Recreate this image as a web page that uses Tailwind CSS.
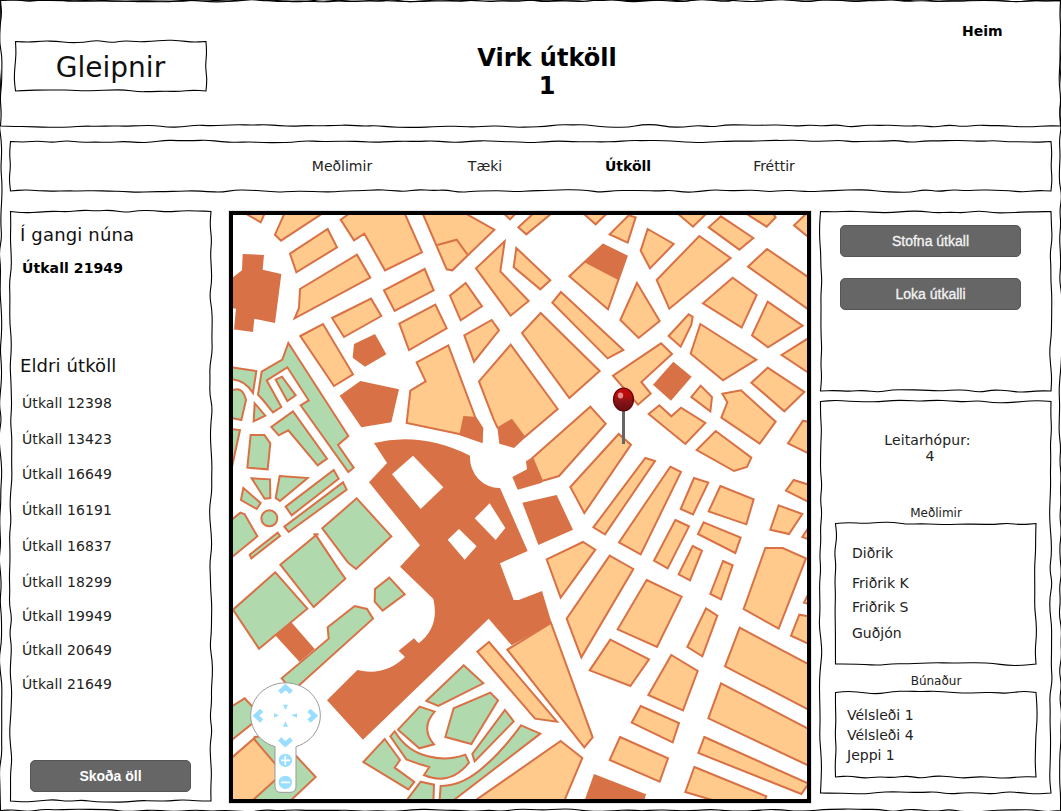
<!DOCTYPE html>
<html lang="is">
<head>
<meta charset="utf-8">
<title>Gleipnir</title>
<script src="https://cdn.jsdelivr.net/npm/@tailwindcss/browser@4"></script>
</head>
<body class="bg-white">
<div data-sketch="1061 811" class="relative w-[1061px] h-[811px] overflow-hidden bg-white font-['DejaVu_Sans',Verdana,sans-serif] text-sm leading-4 text-[#222]">
  <header data-sketch="1061 126" class="relative h-[126px] flex items-start">
    <div data-sketch="191 50" class="relative ml-[15px] mt-[41px] w-[191px] h-[50px] flex items-center justify-center pt-[3px] text-[28px] leading-none text-[#111]"><span>Gleipnir</span></div>
    <h1 class="ml-[241px] mt-11 w-[200px] text-center text-2xl leading-7 font-bold text-black">Virk útköll<br>1</h1>
    <a class="ml-[315px] mt-[23px] font-bold text-black">Heim</a>
  </header>

  <nav data-sketch="1041 50" class="relative mt-[15px] ml-[10px] w-[1041px] h-[50px] flex items-center">
    <a class="w-[100px] ml-[282px] text-center">Meðlimir</a>
    <a class="w-[100px] ml-[43px] text-center">Tæki</a>
    <a class="w-[100px] ml-[43px] text-center font-bold text-black">Útköll</a>
    <a class="w-[100px] ml-[46px] text-center">Fréttir</a>
  </nav>

  <main class="mt-[20px] ml-[10px] flex items-start">
    <aside data-sketch="201 590" class="relative w-[201px] h-[590px] flex flex-col items-start">
      <h2 class="ml-[10px] mt-[13px] text-lg leading-[22px] tracking-[0.16px] text-[#111]">Í gangi núna</h2>
      <p class="ml-3 mt-[14px] font-bold text-black tracking-[0.08px]">Útkall 21949</p>
      <h2 class="ml-[10px] mt-[79px] text-lg leading-[22px] tracking-[0.1px] text-[#111]">Eldri útköll</h2>
      <ul class="ml-3 mt-[18px] flex flex-col tracking-[0.08px]">
        <li class="h-9">Útkall 12398</li>
        <li class="h-[35px]">Útkall 13423</li>
        <li class="h-9">Útkall 16649</li>
        <li class="h-9">Útkall 16191</li>
        <li class="h-9">Útkall 16837</li>
        <li class="h-[34px]">Útkall 18299</li>
        <li class="h-[34px]">Útkall 19949</li>
        <li class="h-[34px]">Útkall 20649</li>
        <li class="h-4">Útkall 21649</li>
      </ul>
      <button class="ml-5 mt-[68px] w-[161px] h-8 rounded-[5px] border border-[#555] bg-[#666] font-['Liberation_Sans',Arial,sans-serif] text-sm font-bold text-white">Skoða öll</button>
    </aside>

    <section class="ml-[18px] mt-0 w-[582px] h-[592px] border-4 border-black bg-white outline outline-1 outline-black/10">
      <svg class="block w-full h-full" viewBox="233 215 574 584">
        <g stroke="#d87145" stroke-width="6" fill="#ffca8c">
          <g transform="translate(228 208) scale(.33333)">
            <path d="M50,15 98,43 112,12ZM170,15 141,80 159,98 290,12ZM186,137 299,63 327,118 205,193ZM216,243 387,140 427,209 200,331 213,300ZM338,35 378,97 409,77 471,187 582,133 525,5 380,5ZM468,247 590,183 617,247 500,309ZM514,347 622,290 656,361 543,426ZM312,330 429,272 460,324 348,387ZM217,384 285,348 375,499 318,534ZM566,463 661,412 741,626 763,661 761,701 694,678 536,645 547,548 593,520Z"/>
            <path fill="#d87145" stroke="none" d="M10,212 42,187 44,138 108,141 104,185 160,198 141,345 79,332 75,372 10,363 18,363 24,302 10,300ZM378,408 441,378 475,439 411,476 374,449ZM335,563 397,519 513,544 490,643 400,658ZM706,624 740,626 763,661 763,705 694,680Z"/>
            <path fill="#b1d9ae" d="M101,491 163,455 181,405 361,684 330,711 377,779 361,792 218,592 242,577 178,478 116,517 160,597 135,613 105,576 90,560ZM143,515 162,506 203,562 178,579ZM10,478 85,489 75,555Q50,514 10,514ZM10,548Q44,532 54,576L40,636 10,630ZM80,586 112,623 77,640Z"/>
          </g>
          <g transform="translate(228 400) scale(.33333)">
            <g fill="#b1d9ae">
              <path d="M195,34 130,81 152,106 181,91 269,196 297,176ZM68,105 109,105 127,130 119,208 58,203ZM10,87 36,90 12,200ZM71,235 126,238 127,294 110,296ZM155,228 239,234 156,303 143,294ZM46,264 98,309 86,327 39,300ZM10,360 37,338 50,343 88,409 10,473ZM65,464 149,398 156,408 70,475ZM173,320 317,210 332,236 191,346ZM169,380 345,247 356,269 182,396ZM283,385 386,295 490,409 384,507 360,488ZM157,494 264,406 330,505 352,536 257,621ZM142,517 15,629 93,746 238,626ZM484,533 530,583 464,632 440,605 441,567Z"/>
              <path d="M256,403H272"/>
              <circle cx="124" cy="355" r="24"/>
            </g>
            <path fill="#d87145" stroke="none" d="M438,129Q580,95 726,167A88,92 0 0 0 816,264L899,453 816,490 857,600 872,600 942,573 971,669 851,736 782,656 405,1019 297,901 388,810Q470,830 531,771L512,752 558,715 572,730Q636,680 616,597L576,558 516,500 576,436 423,247 477,189Z"/>
            <path fill="#fff" stroke="none" d="M555,167 646,262 578,327 492,223ZM785,310 832,384 803,420 740,355ZM693,387 746,439 710,479 659,419Z"/>
          </g>
          <g transform="translate(420 400) scale(.33333)">
            <path d="M272,-166 177,-56 220,56 232,82 276,110 315,110 413,27ZM337,174 511,20 557,71 417,228 366,243ZM451,261 596,102 633,134 493,339ZM520,382 676,174 705,183 555,403ZM380,478 489,426 526,449 422,593ZM569,467 640,507 484,772 440,656Z"/>
            <path fill="#d87145" stroke="none" d="M307,308 410,285 459,389 355,435ZM232,82 276,56 317,112 282,144 238,131ZM318,184 337,172 366,248 293,269 277,231 321,208Z"/>
          </g>
          <g transform="translate(420 208) scale(.33333)">
            <path d="M3,5 80,184 97,187 223,65 125,10ZM250,15 270,34 292,12ZM295,58 345,12 400,12 319,79ZM485,12 527,49 565,12ZM254,100 168,181 272,323 326,279 241,190ZM289,120 391,217 361,244 281,177ZM448,205 549,110 620,145 564,304ZM423,252 397,284 563,451 610,426ZM362,315 306,375 448,570 539,489ZM137,225 90,263 122,337 186,295ZM133,382 215,336 237,367 162,461Z"/>
            <path fill="none" d="M52,111 110,95 142,139"/>
            <path fill="#d87145" stroke="none" d="M549,107 622,144 596,217 493,163Z"/>
          </g>
          <g transform="translate(612 208) scale(.33333)">
            <path d="M47,104 -7,79 50,22 71,28ZM195,15 243,56 285,15ZM327,25 290,58 382,125 424,90ZM395,12 464,56 491,28 480,12ZM590,10 546,52 590,88ZM107,63 185,108 114,181 86,128ZM262,84 356,150 172,302 134,216ZM465,123 408,176 590,305 590,208ZM362,209 273,286 389,359 434,261ZM467,281 572,353 468,418 420,382ZM590,390 509,441 590,495ZM75,225 143,339 80,390 25,336ZM230,319 242,326 238,350 206,416 170,384ZM265,348 433,455 333,517 236,437ZM147,406 180,438 88,522 116,557 78,590 3,503ZM467,479 577,552 517,610 418,524ZM266,533 300,567 295,610 238,567ZM331,557 387,547 491,641 443,707 328,629 346,583Z"/>
            <path fill="#d87145" stroke="none" d="M184,461 239,506 177,578 123,530Z"/>
          </g>
          <g transform="translate(612 400) scale(.33333)">
            <path d="M110,42 142,16 178,49 207,23 280,69 220,132ZM311,93 418,173 405,201 366,213 254,150ZM590,66 573,62 528,130 590,160ZM545,240 590,254 590,306 522,272ZM500,316 571,342 531,402 475,389ZM590,382 571,411 590,418ZM175,200 207,216 86,463 21,427ZM246,234 289,248 243,343 206,327ZM325,258 425,298 403,373 290,334ZM190,360 231,379 167,505 126,482ZM275,367 386,413 370,459 258,402ZM242,438 270,452 234,541 200,523ZM333,483 362,496 327,598 295,582ZM104,540 209,590 135,741 17,688ZM460,444 512,444 582,475 500,686 395,627ZM590,580 576,608 590,612Z"/>
          </g>
          <g transform="translate(612 603) scale(.33333)">
            <path d="M-5,110 111,169 55,249 -67,202ZM282,16 316,38 271,160 226,132ZM383,74 590,184 590,320 339,190ZM590,40 562,35 537,98 590,123ZM327,241 590,378 590,488 289,346ZM277,402 590,542 568,573 259,450ZM247,492 463,580 455,600 330,600 220,567ZM178,156 257,204 213,322 109,276ZM86,309 201,360 182,418 59,359ZM24,402 168,466 143,536 -7,471Z"/>
            <path fill="#d87145" stroke="none" d="M-54,513 102,574 95,600 -85,600Z"/>
          </g>
          <g transform="translate(420 603) scale(.33333)">
            <path d="M207,117 172,146 345,347 411,356ZM262,140 393,60 518,403 493,433ZM422,414 487,465 430,600 155,600Z"/>
            <path fill="#b1d9ae" d="M131,187 190,241 55,309 19,294ZM211,269 234,292 154,423 76,402 101,316ZM255,321 281,355 164,475 157,453ZM303,367 361,392 90,600 58,600 62,549Q130,550 200,484 Q250,440 303,367ZM-1,311 44,326Q0,375 42,424L-2,436 -66,380ZM-89,400 -76,385Q-40,445 24,460 Q80,475 136,455L147,479Q90,550 12,516L28,492 0,484 -41,469ZM2,536 42,545 40,600 -46,600Z"/>
          </g>
          <g transform="translate(228 603) scale(.33333)">
            <path fill="#d87145" stroke="none" d="M140,95 190,58 260,138 215,177Z"/>
            <path fill="#b1d9ae" d="M299,73 380,9 417,18 435,47 210,250 182,250 161,226 302,107ZM10,311 50,286 100,340 10,412ZM80,402 145,395 263,522 180,600 60,600ZM470,408 516,471 500,494 559,537 541,559 406,477Z"/>
            <path d="M10,465 77,407 165,510 65,600 10,600Z"/>
            <!-- pan and zoom control -->
            <path fill="#fff" stroke="#999" stroke-width="3" d="M141,431A104.500,98 0 1 1 204,431V550Q204,568 186,568H159Q141,568 141,550Z"/>
            <path fill="none" stroke="#9df" stroke-width="14" d="M155,268 172,252 190,268M155,408 172,424 190,408M101,322 84,338 101,354M243,322 260,338 243,354"/>
            <path fill="#9df" stroke="none" d="M165,305H180L172,321ZM165,371H180L172,355ZM138,331V344L153,337ZM207,331V344L190,337Z"/>
            <circle cx="172" cy="472" r="20" fill="#9df" stroke="none"/>
            <circle cx="172" cy="538" r="20" fill="#9df" stroke="none"/>
            <path fill="none" stroke="#fff" stroke-width="5" d="M159,472H186M172,458V486M159,538H186"/>
          </g>
        </g>
        <!-- location pin -->
        <defs>
          <linearGradient id="pin" x1="0" y1="0" x2="0" y2="1"><stop offset="0" stop-color="#c80808"/><stop offset=".35" stop-color="#b50d0d"/><stop offset=".55" stop-color="#8a1518"/><stop offset="1" stop-color="#650c10"/></linearGradient>
        </defs>
        <path d="M623.500 408V444" stroke="#666" stroke-width="3"/>
        <ellipse cx="623.500" cy="399.500" rx="10" ry="11.500" fill="url(#pin)" stroke="#5c0508" stroke-width="1.200"/>
        <ellipse cx="620.500" cy="395.500" rx="2.700" ry="3" fill="#e58a8a"/>
      </svg>
    </section>

    <div class="ml-[9px] flex flex-col gap-[10px]">
      <section data-sketch="231 180" class="relative w-[231px] h-[180px] flex flex-col gap-[21px] pl-5 pt-[14px] font-['Liberation_Sans',Arial,sans-serif] text-[#f4f4f4]">
        <button class="w-[181px] h-8 rounded-[5px] border border-[#555] bg-[#666] [-webkit-text-stroke:0.3px_#f4f4f4]">Stofna útkall</button>
        <button class="w-[181px] h-8 rounded-[5px] border border-[#555] bg-[#666] [-webkit-text-stroke:0.3px_#f4f4f4]">Loka útkalli</button>
      </section>
      <section data-sketch="231 392" class="relative w-[231px] h-[392px] flex flex-col pl-[15px]">
        <p class="mt-[31px] w-[190px] text-center"><span class="mr-[5px] tracking-[0.1px]">Leitarhópur:</span><br>4</p>
        <h3 class="mt-[42px] w-[202px] text-center text-xs leading-[14px]">Meðlimir</h3>
        <ul data-sketch="201 141" class="relative mt-[3px] w-[201px] h-[141px] pl-[17px] pt-[22px]">
          <li class="h-[30px]">Diðrik</li>
          <li class="h-6">Friðrik K</li>
          <li class="h-[26px]">Friðrik S</li>
          <li>Guðjón</li>
        </ul>
        <h3 class="mt-[10px] w-[202px] text-center text-xs leading-[14px]">Búnaður</h3>
        <ul data-sketch="201 85" class="relative mt-[4px] w-[201px] h-[85px] pl-3 pt-[13px] leading-5">
          <li>Vélsleði 1</li>
          <li>Vélsleði 4</li>
          <li>Jeppi 1</li>
        </ul>
      </section>
    </div>
  </main>
</div>
<script>
// Hand-drawn frame: each side is a gently wavering line between exact corners.
// data-sketch holds the frame's width and height.
let seed = 7;
const rnd = () => (seed = (seed * 16807) % 2147483647) / 2147483647;
const NS = 'http://www.w3.org/2000/svg';
function side(x1, y1, x2, y2) {
  const len = Math.hypot(x2 - x1, y2 - y1), n = Math.max(3, Math.round(len / 14));
  const nx = (y2 - y1) / len, ny = (x2 - x1) / len;
  let d = '', px = x1, py = y1;
  for (let i = 1; i <= n; i++) {
    const o = i === n ? 0 : (rnd() - 0.5) * 3;
    const x = x1 + (x2 - x1) * i / n + nx * o, y = y1 + (y2 - y1) * i / n + ny * o;
    d += `Q${px},${py} ${(px + x) / 2},${(py + y) / 2}`;
    px = x; py = y;
  }
  return d + `L${x2},${y2}`;
}
document.querySelectorAll('[data-sketch]').forEach(el => {
  const [w, h] = el.dataset.sketch.split(' ').map(Number);
  const svg = document.createElementNS(NS, 'svg'), p = document.createElementNS(NS, 'path');
  svg.setAttribute('class', 'absolute inset-0 w-full h-full overflow-visible pointer-events-none');
  const a = 0.5, r = w - (w > 1050 ? 0.5 : 0), b = h - (h > 800 ? 0.5 : 0);
  p.setAttribute('d', `M${a},${a}` + side(a, a, r, a) + side(r, a, r, b) + side(r, b, a, b) + side(a, b, a, a) + 'Z');
  p.setAttribute('fill', 'none');
  p.setAttribute('stroke', '#000');
  p.setAttribute('stroke-width', '1.1');
  svg.appendChild(p);
  el.appendChild(svg);
});
</script>
</body>
</html>
